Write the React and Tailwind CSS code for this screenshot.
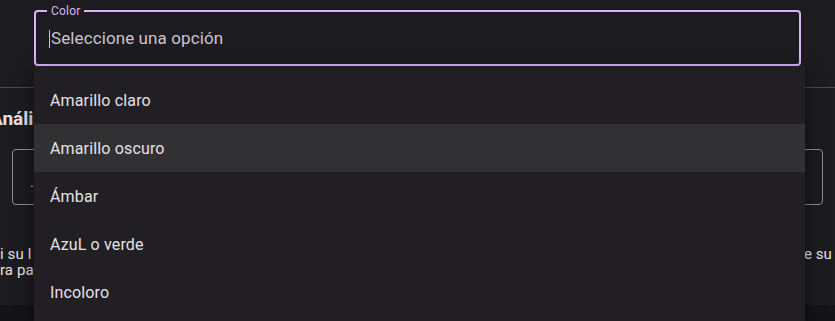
const options = ['Amarillo claro', 'Amarillo oscuro', 'Ámbar', 'AzuL o verde', 'Incoloro', 'Marrón']

function ColorSelect() {
  return (
    <div className="relative h-[56px] rounded-[4px] border-2 border-[#d9b3f7]">
      <label className="absolute -top-[9px] left-[11px] bg-[#1c1b1f] px-[4px] text-[12px] leading-[16px] tracking-[0.2px] text-[#d9b3f7]">
        Color
      </label>
      <div className="flex h-full items-center pl-[13px] pt-[1px] text-[17px] tracking-[0.1px] text-[#cac4cf]">
        <span className="mr-px h-[18px] w-px bg-[#d9b3f7]" />
        Seleccione una opción
      </div>
    </div>
  )
}

function OptionsMenu({ active }) {
  return (
    <ul className="absolute left-[34px] top-[66px] bottom-0 w-[771px] bg-[#211f23] pt-[10px] shadow-[0_6px_16px_rgba(0,0,0,0.5)]">
      {options.map((option) => (
        <li
          key={option}
          className={
            'flex h-[48px] items-center px-[16px] pt-px text-[16px] tracking-[0.15px] text-[#e6e1e5] ' +
            (option === active ? 'bg-[#313033]' : '')
          }
        >
          {option}
        </li>
      ))}
    </ul>
  )
}

export default function App() {
  return (
    <div className="relative h-[321px] w-[835px] overflow-hidden bg-[#1c1b1f] font-['Roboto',sans-serif] text-[#e6e1e5]">
      <div className="h-[88px] border-b border-[#4a4850] px-[34px] pt-[10px]">
        <ColorSelect />
      </div>

      <h3 className="-ml-[10px] mt-[19px] text-[19px] font-bold leading-[24px] text-[#e6e1e5]">Análisis de la muestra</h3>

      <div className="mx-[12px] mt-[18px] flex h-[56px] items-center rounded-[4px] border border-[#8d8a92] pl-[17px] pt-[10px] text-[15px] text-[#cac4cf]">
        .
      </div>

      <div className="mt-[41px] h-[59px] text-[15px] leading-[16px] tracking-[0.1px] text-[#e6e1e5]">
        <div className="-ml-[9px] flex justify-between whitespace-nowrap">
          <span>Si su I{'\u00a0\u00a0\u00a0'}no figura en la lista, comuníquese con el área</span>
          <span className="mr-[3px]">de su</span>
        </div>
        <div className="-ml-[19px] whitespace-nowrap">Obra para participar</div>
      </div>

      <div className="h-[16px] bg-[#141316]" />

      <OptionsMenu active="Amarillo oscuro" />
    </div>
  )
}
